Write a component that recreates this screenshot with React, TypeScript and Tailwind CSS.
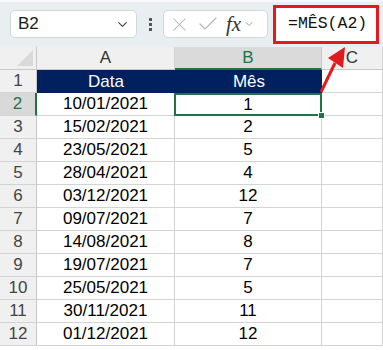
import { ChevronDown, X, Check } from "lucide-react";

const rows: [string, string][] = [
  ["10/01/2021", "1"],
  ["15/02/2021", "2"],
  ["23/05/2021", "5"],
  ["28/04/2021", "4"],
  ["03/12/2021", "12"],
  ["09/07/2021", "7"],
  ["14/08/2021", "8"],
  ["19/07/2021", "7"],
  ["25/05/2021", "5"],
  ["30/11/2021", "11"],
  ["01/12/2021", "12"],
];

const cols = "grid grid-cols-[37px_138px_147px_1fr]";
const cell = "h-[23px] border-r border-b border-[#d4d4d4] flex items-center justify-center";

export default function App() {
  return (
    <div className="relative w-[383px] h-[350px] overflow-hidden bg-white font-['Liberation_Sans',Arial,sans-serif] text-[17px] text-black">
      {/* formula bar */}
      <div className="h-[47px] bg-[#e9eef1] border-t-2 border-[#f7f8f9] flex items-start pt-[8px] pl-[10px]">
        <div className="w-[127px] h-[28px] bg-white rounded-[5px] border border-[#d3d7da] flex items-center pl-[7px] pr-[6px]">
          <span className="flex-1 text-[17px] text-[#1a1a1a]">B2</span>
          <ChevronDown size={15} strokeWidth={1.8} className="text-[#444]" />
        </div>
        <div className="w-[26px] h-[28px] flex flex-col items-center justify-center gap-[2px]">
          <span className="w-[3px] h-[3px] bg-[#555]" />
          <span className="w-[3px] h-[3px] bg-[#555]" />
          <span className="w-[3px] h-[3px] bg-[#555]" />
        </div>
        <div className="w-[105px] h-[28px] bg-white rounded-[5px] border border-[#d3d7da] flex items-center pl-[4px]">
          <X size={23} strokeWidth={1.1} className="text-[#b5b5b5]" />
          <Check size={24} strokeWidth={1.1} className="text-[#b5b5b5] ml-[5px]" />
          <span className="ml-[6px] font-['Liberation_Serif',serif] italic text-[21px] text-[#333] leading-none">fx</span>
          <ChevronDown size={12} strokeWidth={1.6} className="text-[#888] ml-[2px]" />
        </div>
        <div className="ml-[5px] -mt-[5px] w-[106px] h-[39px] bg-white border-[3px] border-[#e2191f] flex items-center pl-[12px] font-['Liberation_Mono',monospace] text-[16.5px] text-[#111]">
          =MÊS(A2)
        </div>
      </div>

      {/* column headers */}
      <div className={`${cols} bg-[#f0f0f0] text-[#333]`}>
        <div className="h-[23px] border-r border-b border-[#c8c8c8] relative">
          <div className="absolute right-[3px] bottom-[3px] w-0 h-0 border-l-[16px] border-l-transparent border-b-[16px] border-b-[#d9d9d9]" />
        </div>
        <div className={`${cell} border-b-[#c8c8c8]`}>A</div>
        <div className="h-[23px] bg-[#dadada] border-r border-[#c8c8c8] border-b-2 border-b-[#217346] flex items-center justify-center text-[#217346]">B</div>
        <div className={`${cell} border-b-[#c8c8c8]`}>C</div>
      </div>

      {/* rows */}
      <div className={cols}>
        <div className={`${cell} bg-[#f0f0f0] text-[#444] border-r-[#c8c8c8]`}>1</div>
        <div className="h-[23px] bg-[#002060] text-white flex items-center justify-center">Data</div>
        <div className="h-[23px] bg-[#002060] text-white flex items-center justify-center border-l border-[#002060]">Mês</div>
        <div className={cell} />
        {rows.map(([d, m], i) => (
          <div key={i} className="contents">
            <div
              className={
                i === 0
                  ? "h-[23px] border-b border-[#d4d4d4] border-r-2 border-r-[#217346] bg-[#d9d9d9] text-[#217346] flex items-center justify-center"
                  : `${cell} bg-[#f0f0f0] text-[#444] border-r-[#c8c8c8]`
              }
            >
              {i + 2}
            </div>
            <div className={cell}>{d}</div>
            <div
              className={
                i === 0
                  ? "h-[23px] border-2 border-[#217346] -ml-px flex items-center justify-center relative"
                  : cell
              }
            >
              {m}
              {i === 0 && (
                <div className="absolute -right-[5px] -bottom-[5px] w-[7px] h-[7px] bg-[#217346] border border-white" />
              )}
            </div>
            <div className={cell} />
          </div>
        ))}
      </div>

      {/* red arrow */}
      <svg className="absolute left-0 top-0 pointer-events-none" width="383" height="350">
        <line x1="321" y1="92" x2="335" y2="63" stroke="#e2191f" strokeWidth="3" />
        <polygon points="345,47 343,68 328,58" fill="#e2191f" />
      </svg>
    </div>
  );
}
